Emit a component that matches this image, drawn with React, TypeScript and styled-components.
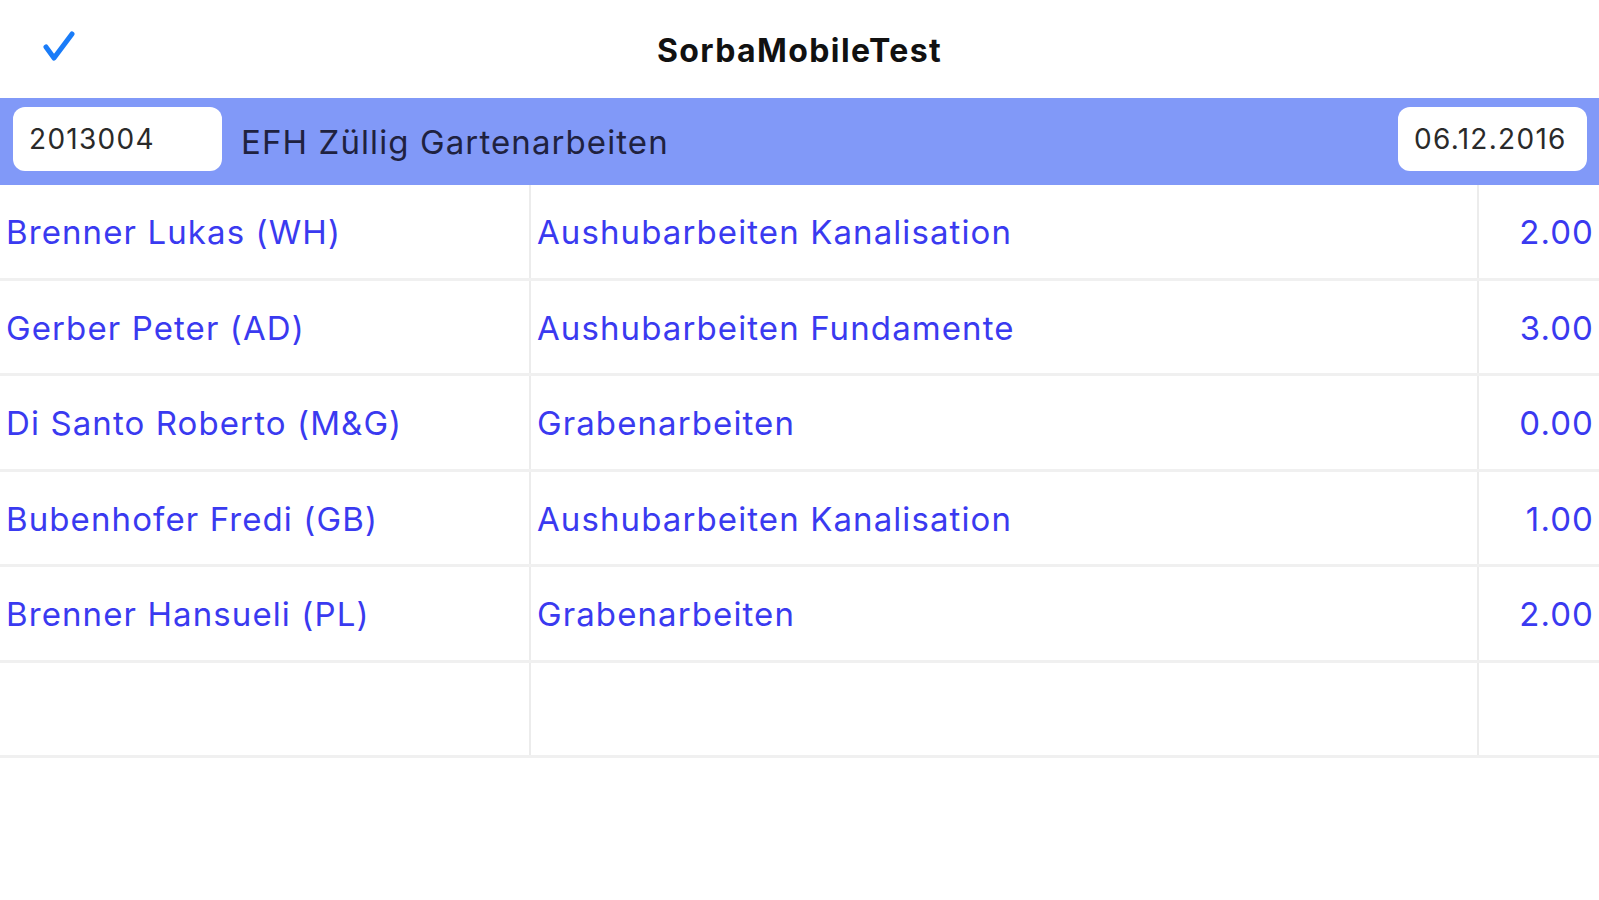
import React from "react";
import styled, { createGlobalStyle } from "styled-components";

const GlobalStyle = createGlobalStyle`
  html, body {
    margin: 0;
    padding: 0;
    background: #ffffff;
  }
  body {
    font-family: Inter, "Liberation Sans", Arial, sans-serif;
  }
`;

interface IEntry {
  worker: string;
  task: string;
  hours: string;
}

const entries: IEntry[] = [
  { worker: "Brenner Lukas (WH)", task: "Aushubarbeiten Kanalisation", hours: "2.00" },
  { worker: "Gerber Peter (AD)", task: "Aushubarbeiten Fundamente", hours: "3.00" },
  { worker: "Di Santo Roberto (M&G)", task: "Grabenarbeiten", hours: "0.00" },
  { worker: "Bubenhofer Fredi (GB)", task: "Aushubarbeiten Kanalisation", hours: "1.00" },
  { worker: "Brenner Hansueli (PL)", task: "Grabenarbeiten", hours: "2.00" },
  { worker: "", task: "", hours: "" },
];

const App = () => {
  return (
    <>
      <GlobalStyle />
      <Page>
        <NavBar>
          <NavLeft>
            <svg width="34" height="32" viewBox="0 0 34 32">
              <path
                d="M4 17 L12 28 L30 4"
                fill="none"
                stroke="#1a7cf8"
                strokeWidth="5"
                strokeLinecap="round"
                strokeLinejoin="round"
              />
            </svg>
          </NavLeft>
          <Title>SorbaMobileTest</Title>
          <div />
        </NavBar>

        <ProjectBar>
          <Field $width={209}>2013004</Field>
          <ProjectName>EFH Züllig Gartenarbeiten</ProjectName>
          <Field $width={189}>06.12.2016</Field>
        </ProjectBar>

        <Table>
          {entries.map((entry, i) => (
            <Row key={i}>
              <Cell $divider>{entry.worker}</Cell>
              <Cell $divider>{entry.task}</Cell>
              <Cell $align="right">{entry.hours}</Cell>
            </Row>
          ))}
        </Table>
      </Page>
    </>
  );
};

export default App;

const Page = styled.div`
  width: 1599px;
  height: 900px;
  background: #ffffff;
  overflow: hidden;
`;

const NavBar = styled.div`
  display: grid;
  grid-template-columns: 1fr auto 1fr;
  align-items: center;
  height: 98px;
  box-sizing: border-box;
`;

const NavLeft = styled.div`
  display: flex;
  align-items: center;
  padding-left: 42px;
  margin-top: -6px;
`;

const Title = styled.div`
  font-size: 32px;
  font-weight: 700;
  letter-spacing: 1.4px;
  color: #111111;
  margin-top: 3px;
`;

const ProjectBar = styled.div`
  display: flex;
  align-items: center;
  height: 87px;
  padding: 0 12px 0 13px;
  background: #8199f8;
  box-sizing: border-box;
`;

const Field = styled.div<{ $width: number }>`
  width: ${(p) => p.$width}px;
  height: 64px;
  box-sizing: border-box;
  display: flex;
  align-items: center;
  padding-left: 16px;
  background: #ffffff;
  border-radius: 12px;
  font-size: 28px;
  letter-spacing: 1.3px;
  color: #2a2a2a;
  margin-top: -6px;
`;

const ProjectName = styled.div`
  flex: 1;
  padding-left: 19px;
  font-size: 33px;
  letter-spacing: 1.1px;
  color: #1f2240;
`;

const Table = styled.div`
  display: flex;
  flex-direction: column;
`;

const Row = styled.div`
  display: grid;
  grid-template-columns: 531px 948px 1fr;
  height: 95.5px;
  box-sizing: border-box;
  border-bottom: 3px solid #f0f0f0;
`;

const Cell = styled.div<{ $divider?: boolean; $align?: "left" | "right" }>`
  display: flex;
  align-items: center;
  justify-content: ${(p) => (p.$align === "right" ? "flex-end" : "flex-start")};
  padding: 2px ${(p) => (p.$align === "right" ? "5px" : "0")} 0
    ${(p) => (p.$align === "right" ? "0" : "6px")};
  border-right: ${(p) => (p.$divider ? "2px solid #ececec" : "none")};
  font-size: 33px;
  letter-spacing: 1.1px;
  color: #3a3af0;
  white-space: nowrap;
  overflow: hidden;
`;
